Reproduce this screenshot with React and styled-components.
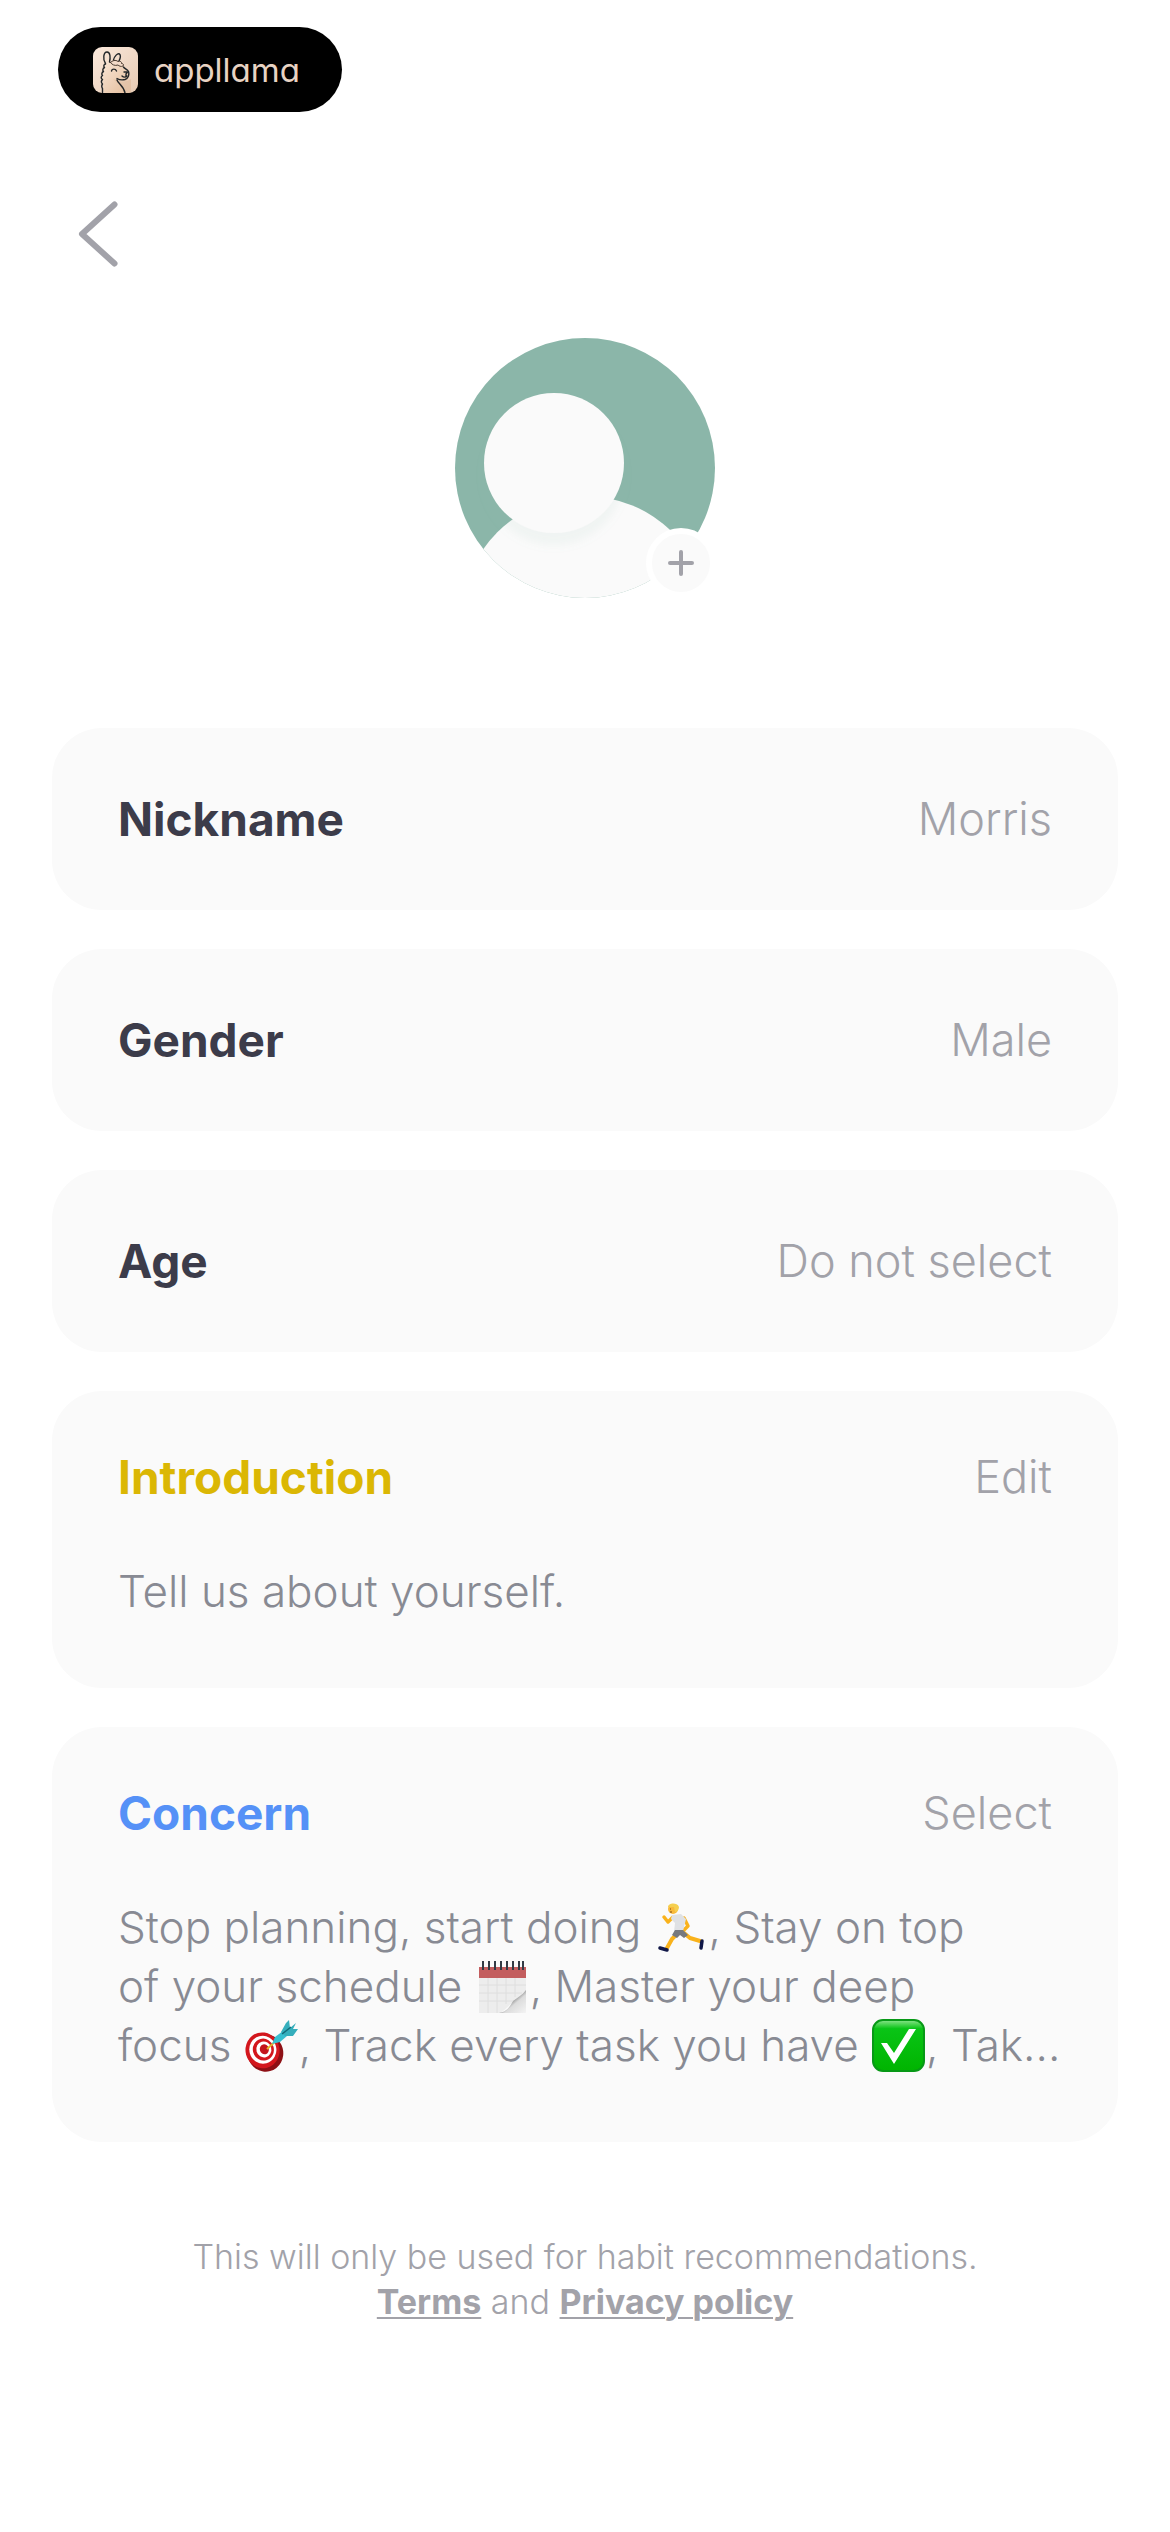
import React from "react";
import styled, { createGlobalStyle } from "styled-components";

const color = {
  ink: "#3c3c4a",
  muted: "#a2a2a9",
  body: "#888a93",
  card: "#fafafa",
  yellow: "#dbb704",
  blue: "#5591f7",
  sage: "#8bb6a9",
  sand: "#e8d3c3",
};

const GlobalStyle = createGlobalStyle`
  *, *::before, *::after { box-sizing: border-box; }
  body {
    margin: 0;
    background: #fff;
    font-family: Inter, "Noto Sans", sans-serif;
    -webkit-font-smoothing: antialiased;
  }
  button {
    margin: 0;
    padding: 0;
    border: 0;
    background: none;
    font: inherit;
    color: inherit;
    cursor: pointer;
  }
  svg { display: block; }
`;

const Page = styled.div`
  display: flex;
  flex-direction: column;
  padding: 27px 52px 200px;
`;

const Brand = styled.a`
  display: flex;
  align-items: center;
  align-self: flex-start;
  gap: 16px;
  height: 85px;
  margin-left: 6px;
  padding: 0 42px 0 35px;
  border-radius: 43px;
  background: #000;
  color: ${color.sand};
  font-size: 33px;
  line-height: 40px;
  font-weight: 400;
  font-feature-settings: "cv11";
  text-decoration: none;
`;

const BackButton = styled.button`
  align-self: flex-start;
  margin: 86px 0 0 21px;
`;

const AvatarButton = styled.button`
  position: relative;
  align-self: center;
  margin: 68px 0 130px;
`;

const Badge = styled.span`
  position: absolute;
  right: -1px;
  bottom: 0;
  display: grid;
  place-items: center;
  width: 70px;
  height: 70px;
  border: 6px solid #fff;
  border-radius: 50%;
  background: ${color.card};
`;

const CardList = styled.main`
  display: flex;
  flex-direction: column;
  gap: 39px;
`;

const RowCard = styled.button`
  display: flex;
  align-items: center;
  justify-content: space-between;
  padding: 61px 66px;
  border-radius: 50px;
  background: ${color.card};
  text-align: left;
`;

const DetailCard = styled.section`
  display: flex;
  flex-direction: column;
  gap: 55px;
  padding: 56px 66px 67px;
  border-radius: 50px;
  background: ${color.card};
`;

const CardHeader = styled.div`
  display: flex;
  align-items: center;
  justify-content: space-between;
`;

const Title = styled.span`
  margin: 0;
  color: ${(p) => p.$tone || color.ink};
  font-size: 46px;
  line-height: 60px;
  font-weight: 700;
`;

const Value = styled.span`
  color: ${color.muted};
  font-size: 45px;
  line-height: 60px;
  font-weight: 300;
`;

const BodyText = styled.p`
  margin: 0;
  color: ${color.body};
  font-size: 44px;
  line-height: 59px;
  font-weight: 300;
`;

const Line = styled.span`
  display: block;
  white-space: nowrap;
`;

const EmojiSvg = styled.svg`
  display: inline-block;
  width: 53px;
  height: 53px;
  margin: 0 1px;
  vertical-align: -11px;
`;

const Footer = styled.footer`
  margin-top: 92px;
  color: ${color.muted};
  font-size: 34px;
  line-height: 45px;
  font-weight: 300;
  text-align: center;
`;

const FooterLink = styled.a`
  color: inherit;
  font-weight: 700;
  text-decoration: underline;
  text-decoration-thickness: 2px;
  text-underline-offset: 3px;
`;

const Llama = () => (
  <svg width="45" height="46" viewBox="0 0 45 46" aria-hidden="true">
    <defs>
      <linearGradient id="sand" x1="0" y1="0" x2="1" y2="1">
        <stop offset="0" stopColor="#fbe9dc" />
        <stop offset="1" stopColor="#e6cab3" />
      </linearGradient>
      <linearGradient id="neck" x1="0" y1="0" x2="1" y2="1">
        <stop offset="0" stopColor="#f8e4d4" />
        <stop offset="1" stopColor="#e3bd9c" />
      </linearGradient>
    </defs>
    <rect width="45" height="46" rx="9" fill="url(#sand)" />
    <path d="M12 17c-3 3-2 9-2 14l1 15h21c-1-5-5-8-8-13l9 1c3-1 4-5 3-8l-7-8-7-3Z" fill="url(#neck)" />
    <path d="M20 32c5 4 9 8 11 14h7V32l-4 2c-5 1-9 0-14-2Z" fill="#d9af8c" opacity=".4" />
    <g fill="none" stroke="#222629" strokeWidth="1.4" strokeLinecap="round" strokeLinejoin="round">
      <path d="M12.500 16.500C9.500 12 10.500 5 14 5c3.500 0 3.500 6 2.500 10" />
      <path d="M20.500 13c1-4 4-7 6-6 1 1 1 4-.5 7" />
      <path d="M17.500 15.500c2-2 5-3 7.500-1 2-1 4 .5 3.500 2 2 0 2.500 1.500 1.500 2.500-2 1-4 0-5-1-3 1-6 0-7.500-2.500Z" fill="#f3dac8" stroke="#4a3a30" strokeWidth="1" />
      <path d="M12.500 17c-2 .5-2 2.500-1 3.500-2 1-2 3-1 4-2 1-2 3-1 4-2 1.500-1.500 3 0 4-1.500 1.500-1.500 3 0 4.500-1 1.500-1 3 0 4.500v4" />
      <path d="M30.500 20c1 1.500 4 2.500 5 4.500 1 3.500-.5 7-3.500 8-3 .8-5.500.5-8-1M24 33c1.500 4 7 6 8 13" />
      <path d="M18.500 24c.5-2.500 4-2.500 5 0M31 25h3.500L33 27v2.500M29 29c1.500 1.500 4 1.500 5 0" />
    </g>
  </svg>
);

const BackIcon = () => (
  <svg width="48" height="72" viewBox="0 0 48 72" fill="none" aria-hidden="true">
    <path d="M41.500 6.500 9 36l32.500 29.500" stroke={color.muted} strokeWidth="6" strokeLinecap="round" strokeLinejoin="round" />
  </svg>
);

const Avatar = () => (
  <svg width="260" height="260" viewBox="0 0 260 260" aria-hidden="true">
    <defs>
      <clipPath id="round"><circle cx="130" cy="130" r="130" /></clipPath>
      <filter id="headShadow" x="-30%" y="-30%" width="160%" height="170%">
        <feDropShadow dx="0" dy="12" stdDeviation="4" floodColor={color.sage} floodOpacity="0.09" />
      </filter>
    </defs>
    <g clipPath="url(#round)">
      <rect width="260" height="260" fill={color.sage} />
      <circle cx="130" cy="282" r="124" fill={color.card} />
      <circle cx="99" cy="125" r="70" fill={color.card} filter="url(#headShadow)" />
    </g>
  </svg>
);

const PlusIcon = () => (
  <svg width="26" height="26" viewBox="0 0 26 26" aria-hidden="true">
    <path d="M13 2v22M2 13h22" stroke={color.muted} strokeWidth="4" strokeLinecap="round" />
  </svg>
);

const Runner = () => (
  <EmojiSvg viewBox="0 0 53 53" role="img" aria-label="Runner">
    <g fill="none" strokeLinecap="round" strokeLinejoin="round">
      <path d="m23 32-6 6-5 9" stroke="#f9b21b" strokeWidth="4" />
      <path d="m29 32 6 5 10 3" stroke="#f9b21b" strokeWidth="4" />
      <path d="m18 16-5 5-4-5" stroke="#f9b21b" strokeWidth="3.500" />
      <path d="m29 17 4 8-4 4" stroke="#f9b21b" strokeWidth="3.500" />
      <path d="m5 47 7 2M47 40l-1 7" stroke="#101747" strokeWidth="3.500" />
    </g>
    <path d="m17 14 9-1 5 5-3 12-9 1 1-9-4-4Z" fill="#dfe1e4" />
    <path d="m20 29 8 0 5 5-4 3-4-3-3 3-5-3Z" fill="#77797d" />
    <circle cx="18" cy="8" r="5" fill="#f9b93a" />
    <path d="M13 6c0-4 9-5 11 0 0 3-2 5-4 5l-1-5Z" fill="#f5cf4f" />
    <path d="M15 8h1M15 11h2" stroke="#7a4b12" strokeWidth="1" />
  </EmojiSvg>
);

const Calendar = () => (
  <EmojiSvg viewBox="0 0 53 53" role="img" aria-label="Calendar">
    <defs>
      <linearGradient id="curl" x1="0" y1="0" x2="1" y2="1">
        <stop offset=".35" stopColor="#555" />
        <stop offset=".6" stopColor="#dcdcdc" />
        <stop offset="1" stopColor="#f4f4f4" />
      </linearGradient>
    </defs>
    <path d="M3 7h47v23L25 53H3Z" fill="#ededed" />
    <path d="M50 30v23H23c8-2 10-5 14-12 4-3 9-6 13-11Z" fill="url(#curl)" />
    <path d="M12 18v35M21 18v35M30 18v26M39 18v19M3 25h47M3 33h43M3 41h34" stroke="#dedede" strokeWidth="1" />
    <path d="M3 7h47v11H3Z" fill="#c35d5e" />
    <path d="M7 1v9M13 1v9M19 1v9M25 1v9M31 1v9M37 1v9M43 1v9M47 1v9" stroke="#333b45" strokeWidth="2" />
  </EmojiSvg>
);

const Target = () => (
  <EmojiSvg viewBox="0 0 53 53" role="img" aria-label="Target">
    <g transform="rotate(-15 19 33)">
      <ellipse cx="20" cy="34" rx="18" ry="19" fill="#8e1015" />
      <ellipse cx="18" cy="31" rx="17" ry="18" fill="#d3171d" />
      <ellipse cx="18.500" cy="30.500" rx="13.500" ry="14" fill="#fff" />
      <ellipse cx="19" cy="30.500" rx="10.500" ry="11" fill="#d3171d" />
      <ellipse cx="19.500" cy="30.500" rx="7.500" ry="8" fill="#fff" />
      <ellipse cx="20" cy="30.500" rx="4.500" ry="5" fill="#c4151b" />
    </g>
    <path d="m22 30 10-9" stroke="#e4b72b" strokeWidth="2" />
    <path d="m27 25 3-7 8-6 4 5-7 6Z" fill="#37bfd0" />
    <path d="m36 13 5-9 3-3 1 8 6-5-3 6 5 0-5 7-8 0Z" fill="#35aebc" />
    <path d="m37 15 9-7" stroke="#126a78" strokeWidth="1.500" />
  </EmojiSvg>
);

const Check = () => (
  <EmojiSvg viewBox="0 0 53 53" role="img" aria-label="Done">
    <defs>
      <linearGradient id="green" x1="0" y1="0" x2="0" y2="1">
        <stop offset="0" stopColor="#8ce48c" />
        <stop offset=".17" stopColor="#09c416" />
        <stop offset="1" stopColor="#00b400" />
      </linearGradient>
    </defs>
    <rect x="1" y="1" width="51" height="51" rx="10" fill="url(#green)" stroke="#079916" strokeWidth="2" />
    <path d="M9 24h6l7 10 15-24h7L22 45Z" fill="#fff" />
  </EmojiSvg>
);

const fields = [
  { label: "Nickname", value: "Morris" },
  { label: "Gender", value: "Male" },
  { label: "Age", value: "Do not select" },
];

export default function App() {
  return (
    <>
      <GlobalStyle />
      <Page>
        <Brand href="#">
          <Llama />
          appllama
        </Brand>
        <BackButton type="button" aria-label="Back">
          <BackIcon />
        </BackButton>
        <AvatarButton type="button" aria-label="Change profile picture">
          <Avatar />
          <Badge>
            <PlusIcon />
          </Badge>
        </AvatarButton>
        <CardList>
          {fields.map((field) => (
            <RowCard type="button" key={field.label}>
              <Title>{field.label}</Title>
              <Value>{field.value}</Value>
            </RowCard>
          ))}
          <DetailCard>
            <CardHeader>
              <Title as="h2" $tone={color.yellow}>Introduction</Title>
              <Value as="button" type="button">Edit</Value>
            </CardHeader>
            <BodyText>Tell us about yourself.</BodyText>
          </DetailCard>
          <DetailCard>
            <CardHeader>
              <Title as="h2" $tone={color.blue}>Concern</Title>
              <Value as="button" type="button">Select</Value>
            </CardHeader>
            <BodyText>
              <Line>Stop planning, start doing <Runner />, Stay on top</Line>
              <Line>of your schedule <Calendar />, Master your deep</Line>
              <Line>focus <Target />, Track every task you have <Check />, Tak...</Line>
            </BodyText>
          </DetailCard>
        </CardList>
        <Footer>
          This will only be used for habit recommendations.
          <br />
          <FooterLink href="#">Terms</FooterLink> and <FooterLink href="#">Privacy policy</FooterLink>
        </Footer>
      </Page>
    </>
  );
}
